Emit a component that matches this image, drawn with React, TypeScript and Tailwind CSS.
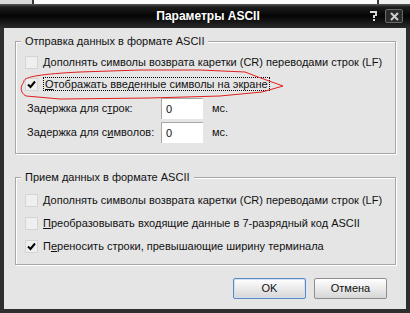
import React from "react";

function Check({ checked }: { checked?: boolean }) {
  return (
    <div className="w-[13px] h-[13px] shrink-0 border border-[#d4d4d4] bg-[#efefef] flex items-center justify-center">
      {checked && (
        <svg width="9" height="9" viewBox="0 0 9 9">
          <path d="M1 4.5 L3.5 7 L8 1.5" fill="none" stroke="#000" strokeWidth="2" />
        </svg>
      )}
    </div>
  );
}

function Row({ checked, children, h = "h-[22px]" }: { checked?: boolean; children: React.ReactNode; h?: string }) {
  return (
    <div className={`${h} flex items-center gap-[5px]`}>
      <Check checked={checked} />
      <div className="whitespace-nowrap">{children}</div>
    </div>
  );
}

function DelayRow({ label }: { label: React.ReactNode }) {
  return (
    <div className="h-[21px] flex items-center pl-[2px]">
      <div className="w-[134px] whitespace-nowrap">{label}</div>
      <div className="w-[42px] h-[21px] bg-white border-t border-l border-[#a8a8a8] border-b-[#f4f4f4] border-r-[#f4f4f4] flex items-center pl-[4px]">0</div>
      <div className="ml-[9px]">мс.</div>
    </div>
  );
}

export default function App() {
  return (
    <div className="w-[410px] h-[313px] flex flex-col overflow-hidden bg-[#efefef] font-['Liberation_Sans',Arial,sans-serif] text-[11px] text-[#111]">
      <div className="h-[4px] flex shrink-0">
        <div className="w-[32px] bg-[#d9d9d9]" />
        <div className="w-[2px] bg-[#3a3a3a]" />
        <div className="w-[343px] bg-[#fbfbfb]" />
        <div className="w-[2px] bg-[#3a3a3a]" />
        <div className="flex-1 bg-[#efefef]" />
      </div>
      <div className="flex-1 flex flex-col bg-[#2e2e2e]">
        <div className="h-[24px] shrink-0 flex items-center bg-[linear-gradient(#5a5a5a_0px,#1c1c1c_3px,#050505_12px,#2a2a2a_24px)] relative">
          <div className="flex-1 text-center text-white font-bold text-[12px] pl-[6px]">Параметры ASCII</div>
          <div className="absolute right-[7px] top-[5px] flex items-center gap-[6px]">
            <svg width="10" height="12" viewBox="0 0 10 12">
              <path d="M1 1 H8 V6 H6 V8 H4 V5 H6 V3 H1 Z" fill="#d8d8d8" />
              <rect x="4" y="9" width="2" height="2" fill="#d8d8d8" />
            </svg>
            <div className="w-[18px] h-[14px] border border-[#6a6a6a] bg-[#2b2b2b] rounded-[2px] flex items-center justify-center">
              <svg width="9" height="9" viewBox="0 0 9 9">
                <path d="M1 1 L8 8 M8 1 L1 8" stroke="#cfcfcf" strokeWidth="2" />
              </svg>
            </div>
          </div>
        </div>
        <div className="flex-1 mx-[4px] mb-[4px] bg-[#e5e5e5] flex flex-col px-[11px] pr-[10px] pt-[6px] relative">
          <fieldset className="border border-[#a7a7a7] shadow-[1px_1px_0_#fff,inset_1px_1px_0_#fff] pl-[9px] pt-[3px] pb-[10px]">
            <legend className="ml-[-4px] px-[4px] bg-[#e5e5e5] leading-[14px]">Отправка данных в формате ASCII</legend>
            <Row>
              <span className="underline">Д</span>ополнять символы возврата каретки (CR) переводами строк (LF)
            </Row>
            <Row checked>
              <span className="border border-dotted border-black px-[1px]">
                <span className="underline">О</span>тображать введенные символы на экране
              </span>
            </Row>
            <div className="mt-[3px] flex flex-col gap-[3px]">
              <DelayRow label={<>Задержка для с<span className="underline">т</span>рок:</>} />
              <DelayRow label={<>Задержка для с<span className="underline">и</span>мволов:</>} />
            </div>
          </fieldset>
          <fieldset className="mt-[16px] border border-[#a7a7a7] shadow-[1px_1px_0_#fff,inset_1px_1px_0_#fff] pl-[9px] pt-[5px] pb-[6px]">
            <legend className="ml-[-4px] px-[4px] bg-[#e5e5e5] leading-[14px]">Прием данных в формате ASCII</legend>
            <Row h="h-[23px]">
              <span className="underline">Д</span>ополнять символы возврата каретки (CR) переводами строк (LF)
            </Row>
            <Row h="h-[23px]">
              <span className="underline">П</span>реобразовывать входящие данные в 7-разрядный код ASCII
            </Row>
            <Row h="h-[23px]" checked>
              П<span className="underline">е</span>реносить строки, превышающие ширину терминала
            </Row>
          </fieldset>
          <div className="mt-[13px] flex justify-end gap-[8px] pr-[9px]">
            <button className="w-[73px] h-[21px] rounded-[2px] border border-[#5f86c0] bg-[linear-gradient(#ffffff,#e6e6e6_60%,#d6d6d6)] shadow-[inset_0_0_0_1px_#cfe0f5]">OK</button>
            <button className="w-[73px] h-[21px] rounded-[2px] border border-[#8e8e8e] bg-[linear-gradient(#ffffff,#e6e6e6_60%,#d6d6d6)]">Отмена</button>
          </div>
          <svg className="absolute left-0 top-0 pointer-events-none" width="402" height="281" viewBox="4 28 402 281">
            <path
              d="M24 82 C22 77, 40 74, 80 72 L140 70 L200 70 L245 72 L258 77 L283 86 L262 92 L220 96 L150 98 L60 99 L26 96 C20 93, 20 86, 24 82 Z"
              fill="none"
              stroke="#e21e1e"
              strokeWidth="1"
            />
          </svg>
        </div>
      </div>
    </div>
  );
}
